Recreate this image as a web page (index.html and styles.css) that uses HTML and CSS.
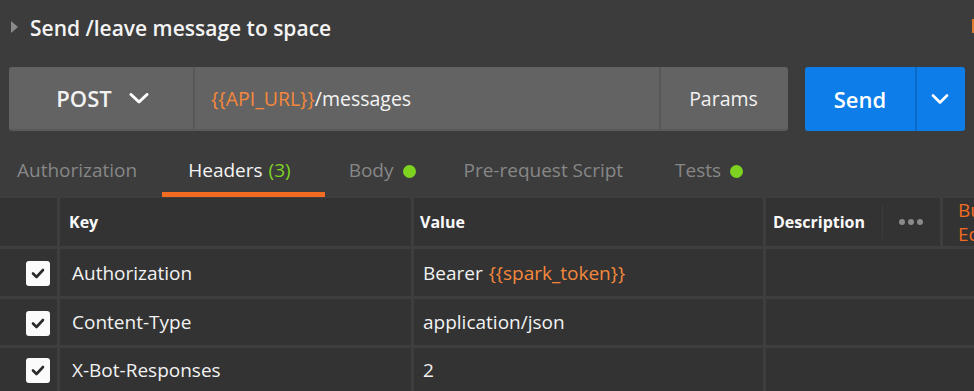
FILE: index.html
```html
<!DOCTYPE html>
<html>
<head>
<meta charset="utf-8">
<link rel="stylesheet" href="styles.css">
</head>
<body>
<div class="page">
  <div class="title-row">
    <span class="caret"></span>
    <span class="title">Send /leave message to space</span>
    <span class="edge-mark"></span>
  </div>

  <div class="request-row">
    <div class="url-bar">
      <div class="method">
        <span>POST</span>
        <svg class="chev" width="20" height="11" viewBox="0 0 20 11"><polyline points="2,1.5 10,9 18,1.5" fill="none" stroke="#fff" stroke-width="3" stroke-linecap="round" stroke-linejoin="round"/></svg>
      </div>
      <div class="url"><span class="var">{{API_URL}}</span>/messages</div>
      <div class="params">Params</div>
    </div>
    <div class="send">
      <div class="send-main">Send</div>
      <div class="send-drop">
        <svg width="18" height="11" viewBox="0 0 18 11"><polyline points="2,1.5 9,8.5 16,1.5" fill="none" stroke="#fff" stroke-width="2.6" stroke-linecap="round" stroke-linejoin="round"/></svg>
      </div>
    </div>
  </div>

  <div class="tabs">
    <div class="tab first">Authorization</div>
    <div class="tab active">Headers <span class="green">(3)</span></div>
    <div class="tab">Body <span class="dot"></span></div>
    <div class="tab pre">Pre-request Script</div>
    <div class="tab">Tests <span class="dot"></span></div>
  </div>

  <div class="table">
    <div class="cell head"></div>
    <div class="cell head hk">Key</div>
    <div class="cell head hv">Value</div>
    <div class="cell head hd">
      <div class="desc">Description</div>
      <div class="more"><i></i><i></i><i></i></div>
      <div class="bulk">Bulk<br>Edit</div>
    </div>

    <div class="cell chk"><span class="box"><svg width="14" height="11" viewBox="0 0 14 11"><polyline points="2,5.5 5.5,9 12,2" fill="none" stroke="#2b2b2b" stroke-width="2.6" stroke-linecap="round" stroke-linejoin="round"/></svg></span></div>
    <div class="cell key">Authorization</div>
    <div class="cell val">Bearer <span class="var">{{spark_token}}</span></div>
    <div class="cell"></div>

    <div class="cell chk"><span class="box"><svg width="14" height="11" viewBox="0 0 14 11"><polyline points="2,5.5 5.5,9 12,2" fill="none" stroke="#2b2b2b" stroke-width="2.6" stroke-linecap="round" stroke-linejoin="round"/></svg></span></div>
    <div class="cell key">Content-Type</div>
    <div class="cell val">application/json</div>
    <div class="cell"></div>

    <div class="cell chk"><span class="box"><svg width="14" height="11" viewBox="0 0 14 11"><polyline points="2,5.5 5.5,9 12,2" fill="none" stroke="#2b2b2b" stroke-width="2.6" stroke-linecap="round" stroke-linejoin="round"/></svg></span></div>
    <div class="cell key">X-Bot-Responses</div>
    <div class="cell val">2</div>
    <div class="cell"></div>
  </div>
</div>
</body>
</html>
```

FILE: styles.css
```css
* { box-sizing: border-box; }
html, body {
  margin: 0;
  padding: 0;
  background: #3c3c3c;
  overflow: hidden;
}
body {
  font-family: "Open Sans", "Noto Sans", sans-serif;
  color: #f2f2f2;
  width: 974px;
  height: 391px;
}
.page {
  display: flex;
  flex-direction: column;
  height: 391px;
}

/* title */
.title-row {
  height: 55px;
  display: flex;
  align-items: center;
  padding-left: 11px;
}
.caret {
  width: 0;
  height: 0;
  border-left: 7px solid #8a8a8a;
  border-top: 6px solid transparent;
  border-bottom: 6px solid transparent;
  margin-right: 12px;
  margin-top: -1px;
}
.title {
  font-size: 21px;
  font-weight: 600;
  line-height: 30px;
  color: #f4f4f4;
}
.edge-mark {
  margin-left: auto;
  width: 2px;
  height: 14px;
  background: #e07a30;
  align-self: flex-start;
  margin-top: 19px;
}

/* request row */
.request-row {
  margin-top: 12px;
  height: 64px;
  display: flex;
  padding-left: 9px;
}
.url-bar {
  width: 779px;
  display: flex;
  background: #636363;
  border-radius: 3px;
  border-bottom: 2px solid #5a5a5a;
  font-size: 19.5px;
}
.method {
  width: 186px;
  display: flex;
  align-items: center;
  justify-content: center;
  gap: 17px;
  font-size: 22px;
  font-weight: 600;
  border-right: 2px solid #585858;
  padding-left: 3px;
}
.chev { margin-top: 1px; }
.url {
  flex: 1;
  display: flex;
  align-items: center;
  padding-left: 16px;
  color: #f4f4f4;
}
.var { color: #f5883c; }
.params {
  width: 129px;
  display: flex;
  align-items: center;
  justify-content: center;
  border-left: 2px solid #585858;
  padding-right: 2px;
}
.send {
  margin-left: 17px;
  width: 160px;
  display: flex;
  background: #0c7de9;
  border-radius: 3px;
}
.send-main {
  width: 112px;
  display: flex;
  align-items: center;
  justify-content: center;
  font-size: 22px;
  font-weight: 600;
  color: #fff;
  border-right: 2px solid #0a6bcc;
}
.send-drop {
  flex: 1;
  display: flex;
  align-items: center;
  justify-content: center;
  padding-right: 2px;
}

/* tabs */
.tabs {
  height: 66px;
  display: flex;
  font-size: 19px;
}
.tab {
  padding: 26px 24px 9px 24px;
  line-height: 26px;
  color: #878787;
  border-bottom: 5px solid transparent;
  display: flex;
  align-items: center;
  white-space: nowrap;
}
.tab.first { padding-left: 17px; padding-right: 25px; }
.tab.active {
  color: #f4f4f4;
  border-bottom-color: #f26b22;
  padding-left: 26px;
  padding-right: 34px;
}
.tab.pre { padding-right: 28px; }
.green { color: #7ed321; margin-left: 6px; }
.dot {
  display: inline-block;
  width: 13px;
  height: 13px;
  border-radius: 50%;
  background: #7ed321;
  margin-left: 9px;
  margin-top: 2px;
}

/* table */
.table {
  flex: 1;
  display: grid;
  grid-template-columns: 57px 351px 349px 1fr;
  grid-template-rows: 48px 47px 46px 1fr;
  gap: 3px;
  background: #3e3e3e;
  padding-top: 1px;
}
.cell {
  background: #333333;
  display: flex;
  align-items: center;
  font-size: 19px;
  color: #f2f2f2;
  white-space: nowrap;
  overflow: hidden;
}
.head {
  font-size: 16px;
  font-weight: 700;
  color: #fafafa;
}
.hk { padding-left: 9px; }
.hv { padding-left: 6px; }
.hd {
  padding: 0;
  background: #3e3e3e;
  gap: 3px;
  align-items: stretch;
}
.desc {
  width: 116px;
  flex-shrink: 0;
  background: #333333;
  display: flex;
  align-items: center;
  padding-left: 7px;
  margin-right: -3px;
}
.more {
  width: 58px;
  flex-shrink: 0;
  background: linear-gradient(#3c3c3c, #3c3c3c) left center / 1px 34px no-repeat, #333333;
  display: flex;
  align-items: center;
  justify-content: center;
  gap: 3px;
}
.more i {
  display: block;
  width: 6px;
  height: 6px;
  border-radius: 50%;
  background: #8a8a8a;
}
.bulk {
  flex: 1;
  min-width: 0;
  background: #333333;
  color: #f26b22;
  font-weight: 400;
  font-size: 19px;
  line-height: 24px;
  padding-left: 15px;
  display: flex;
  align-items: center;
  overflow: hidden;
}
.key { padding-left: 12px; }
.val { padding-left: 9px; }
.val .var { margin-left: 6px; }
.chk {
  justify-content: flex-end;
  padding-right: 7px;
}
.box {
  width: 24px;
  height: 25px;
  background: #fbfbfb;
  border-radius: 3px;
  display: flex;
  align-items: center;
  justify-content: center;
  margin-top: 2px;
}
```
